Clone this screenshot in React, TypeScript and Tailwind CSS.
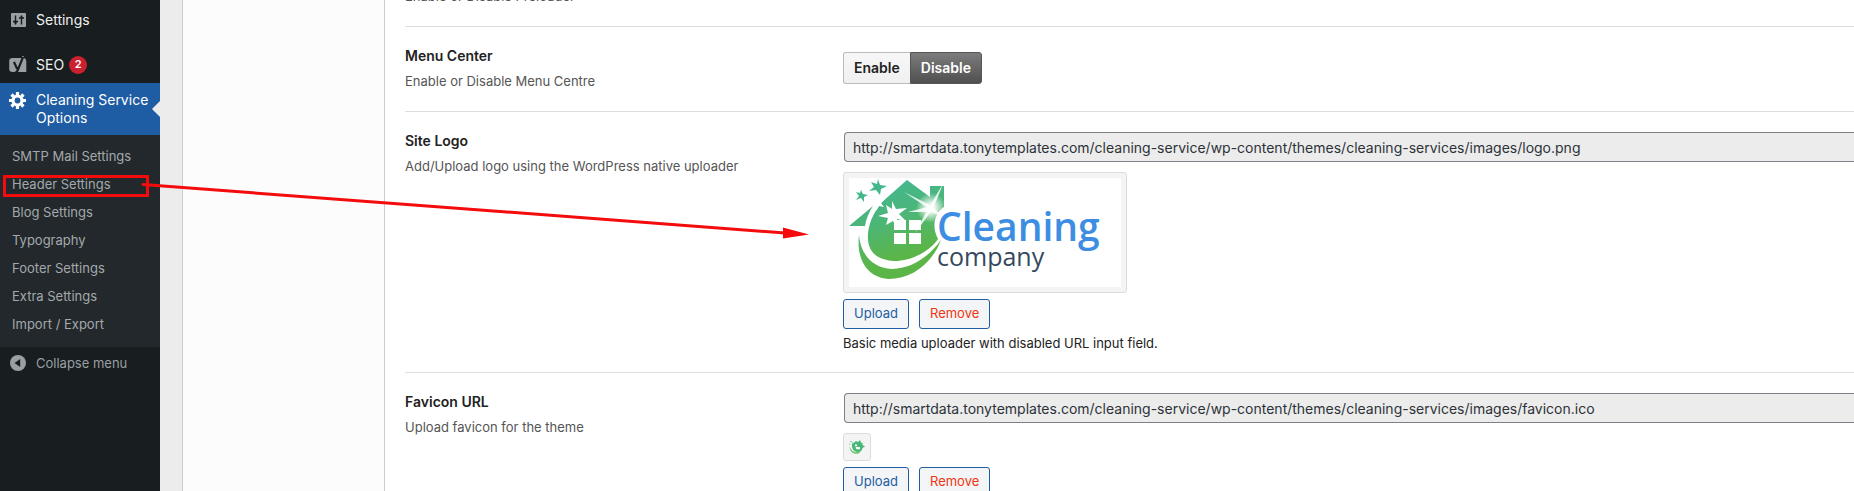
import type { ReactNode } from "react";

const IMAGES_URL =
  "http://smartdata.tonytemplates.com/cleaning-service/wp-content/themes/cleaning-services/images";

const submenu = [
  "SMTP Mail Settings",
  "Header Settings",
  "Blog Settings",
  "Typography",
  "Footer Settings",
  "Extra Settings",
  "Import / Export",
];

function SettingsIcon() {
  return (
    <svg viewBox="0 0 20 20" className="h-5 w-5 shrink-0" aria-hidden="true">
      <rect x="3" y="3" width="15" height="14" rx="1" fill="#9a9fa3" />
      <path d="M7.5 5.5v9M13.5 5.5v9" stroke="#181d1f" strokeWidth="1.4" />
      <path d="M5 11.5h5M11 8h5" stroke="#181d1f" strokeWidth="1.6" />
      <path d="M5.8 12.2h3.4l-1.7 2.2zM11.8 7.6h3.4l-1.7-2.2z" fill="#181d1f" />
    </svg>
  );
}

function YoastIcon() {
  return (
    <svg viewBox="0 0 20 20" className="h-5 w-5 shrink-0" aria-hidden="true">
      <path d="M4.5 3H16c1.400.5 2.300 1.800 2.300 3.300V17H4.500A3.300 3.300 0 0 1 1.200 13.700V6.300A3.300 3.300 0 0 1 4.500 3z" fill="#9a9fa3" />
      <path d="M6 7l3.200 7M15.500.8L9.800 15.200c-.8 2-1.900 2.900-4 2.900" stroke="#181d1f" strokeWidth="2.2" fill="none" />
      <path d="M14.300 1.500h1.500" stroke="#9a9fa3" strokeWidth="1" />
    </svg>
  );
}

function GearIcon() {
  return (
    <svg viewBox="0 0 20 20" className="h-5 w-5 shrink-0" fill="none" stroke="#fff" aria-hidden="true">
      <circle cx="9.5" cy="9.5" r="4.5" strokeWidth="3.2" />
      <path d="M9.500 1v3M9.500 15v3M1 9.500h3M15 9.500h3M3.500 3.500l2 2M13.500 13.500l2 2M3.500 15.500l2-2M13.500 5.500l2-2" strokeWidth="3.2" />
    </svg>
  );
}

function CollapseIcon() {
  return (
    <svg viewBox="0 0 20 20" className="h-5 w-5 shrink-0" aria-hidden="true">
      <circle cx="10" cy="10" r="8" fill="#9a9fa3" />
      <path d="M12.200 6v8L6.500 10z" fill="#181d1f" />
    </svg>
  );
}

function HouseMark() {
  return (
    <g>
      <defs>
        <linearGradient id="leaf" gradientUnits="userSpaceOnUse" x1="30" y1="5" x2="60" y2="100">
          <stop offset="0" stopColor="#43b78f" />
          <stop offset="0.35" stopColor="#4bb67a" />
          <stop offset="0.75" stopColor="#5ab54a" />
          <stop offset="1" stopColor="#5cb645" />
        </linearGradient>
        <radialGradient id="glow">
          <stop offset="0" stopColor="#fff" />
          <stop offset="0.3" stopColor="#fff" stopOpacity="0.85" />
          <stop offset="1" stopColor="#fff" stopOpacity="0" />
        </radialGradient>
      </defs>
      <g fill="url(#leaf)">
        <path d="M0 48L24 28C20 34 17 41 16 48z" />
        <path d="M58 2L81 19V8h14v21C86 35 82 48 89 61 80 74 62 83 45 83 28 82 20 74 19 62 18 50 23 36 33 24z" />
        <path d="M10 57C11 73 21 90 43 91 65 90 80 78 92 62 83 86 62 101 40 101 19 100 7 82 10 57z" />
        <path d="M29 1l2 6 7 1-6 3-1 6-4-5-7 1 5-4-3-5 6 2z" />
        <path d="M12 12l2 4 5 1-4 2v5l-3-4-5 2 3-4-3-4 4 1z" />
      </g>
      <g fill="#fff">
        <path d="M28 18l2 4 6-1-4 4 3 4-5-1-3 5-1-5-5-1 4-3-3-5 5 2z" />
        <path d="M43 23l4 8 11-1-8 6 7 7-9-2 1 11-5-9-7 4 2-7-10-2 10-3-2-8 6 4z" />
        <path d="M45 42h12v10H45zM60 42h12v10H60zM45 55h12v11H45zM60 55h12v11H60z" />
        <path d="M55 14l28 14-1 4zM94 6L84 31l-18 24 14-26zM59 34l23-6 14 12-14-6z" fillOpacity="0.85" />
      </g>
      <circle cx="82" cy="30" r="15" fill="url(#glow)" />
    </g>
  );
}

function SiteLogo() {
  return (
    <svg viewBox="0 0 272 109" className="block w-68 bg-white" role="img" aria-label="Cleaning company">
      <HouseMark />
      <text x="88" y="63" fontFamily="Open Sans, sans-serif" fontWeight="600" fontSize="39" fill="#3d8de3">
        Cleaning
      </text>
      <text x="88" y="88" fontFamily="Open Sans, sans-serif" fontSize="25" fill="#34495e">
        company
      </text>
    </svg>
  );
}

function Favicon() {
  return (
    <svg viewBox="0 0 16 16" className="block h-4 w-4" role="img" aria-label="Favicon">
      <path d="M3 5l4-3 2 1 2-2 1 2.500 1.500.5v2L16 7.500l-2.500 1.500c-.5 3-2.500 4-5 4C4.500 12.500 2.500 9.500 3 5z" fill="#48b878" />
      <path d="M.8 6.500C1 10.500 4 13.500 8 13.300l4-1.300c-2 3-5.500 3.500-8 2C1.500 12.500.2 9.500.8 6.500z" fill="#63c05c" />
      <path d="M1 2h2v1H1zM3 3.500h1.500V5H3zM0 4.500h1.500v1H0z" fill="#7fd0ae" />
      <path d="M6 5.500h2v1.800H6zM6.500 8H11v2.200H7.500z" fill="#fff" />
    </svg>
  );
}

function FieldRow({ title, description, children }: { title: string; description: string; children: ReactNode }) {
  return (
    <section className="flex border-t border-[#dedede] pt-5 pb-5">
      <div className="w-[438px] shrink-0">
        <h2 className="text-sm leading-[18px] font-semibold text-[#222]">{title}</h2>
        <p className="mt-1.5 text-[13px] leading-5 text-[#555]">{description}</p>
      </div>
      <div className="min-w-0 flex-1">{children}</div>
    </section>
  );
}

function MediaField({ label, url, preview, note }: { label: string; url: string; preview: ReactNode; note?: string }) {
  return (
    <div>
      <input
        type="text"
        readOnly
        aria-label={label}
        value={url}
        className="ml-px block h-[30px] w-full rounded-l border border-r-0 border-[#7e8087] bg-[#ececec] px-2 text-sm text-[#2c3338] outline-none"
      />
      <div className="mt-2.5 w-fit rounded-[3px] border border-[#dcdcdc] bg-[#f4f4f4] p-[5px]">{preview}</div>
      <div className="mt-1.5 flex gap-2.5">
        <button type="button" className="h-[30px] rounded-[3px] border border-[#1e5ca3] bg-[#f3f5f6] px-2.5 text-[13px] text-[#1e5ca3]">
          Upload
        </button>
        <button type="button" className="h-[30px] rounded-[3px] border border-[#1e5ca3] bg-[#f3f5f6] px-2.5 text-[13px] text-[#ef3511]">
          Remove
        </button>
      </div>
      {note && <p className="mt-1.5 text-[13px] leading-[17px] text-[#222]">{note}</p>}
    </div>
  );
}

function Sidebar() {
  return (
    <nav className="w-40 shrink-0 bg-[#181d1f] pt-1 text-sm text-[#f0f0f1]">
      <a href="#settings" className="flex h-[34px] items-center gap-2 pl-2 pb-0.5">
        <SettingsIcon />
        Settings
      </a>
      <a href="#seo" className="mt-[11px] flex h-[34px] items-center gap-2 pl-2 pb-0.5">
        <YoastIcon />
        <span className="flex items-center gap-[5px]">
          SEO
          <span className="flex h-[18px] w-[18px] items-center justify-center rounded-full bg-[#ca2030] text-[11px] font-semibold text-white">
            2
          </span>
        </span>
      </a>
      <a href="#options" className="relative flex gap-2 bg-[#1e5ca3] py-2 pl-2 text-white">
        <GearIcon />
        <span className="leading-[18px]">
          Cleaning Service
          <br />
          Options
        </span>
        <span className="absolute top-[18px] right-0 border-y-8 border-r-8 border-y-transparent border-r-[#ececec]" />
      </a>
      <ul className="bg-[#22282b] pt-[7px] pb-[9px] text-[13px] text-[#a4a8ab]">
        {submenu.map((item) => (
          <li key={item}>
            <a href="#" className="block pl-3 leading-7">
              {item}
            </a>
          </li>
        ))}
      </ul>
      <button type="button" className="flex h-[34px] items-center gap-2 pl-2 pb-0.5 text-[13px] text-[#9a9fa3]">
        <CollapseIcon />
        Collapse menu
      </button>
    </nav>
  );
}

// Red frame around "Header Settings" with an arrow to the logo preview
function Annotation() {
  return (
    <svg className="pointer-events-none absolute top-0 left-0" width="820" height="260" aria-hidden="true">
      <rect x="4.5" y="176.5" width="143" height="19" fill="none" stroke="#f40b0b" strokeWidth="3" />
      <path d="M143 184.500L785 233" stroke="#f40b0b" strokeWidth="3" strokeLinecap="round" />
      <path d="M783 227.500L809 234.500 783 238.500z" fill="#f40b0b" />
    </svg>
  );
}

export default function App() {
  return (
    <div className="relative flex h-screen overflow-hidden bg-[#ececec] font-[Inter,sans-serif]">
      <Sidebar />
      <div className="ml-[22px] w-[203px] shrink-0 border-x border-[#ccc] bg-[#fcfcfc]" />
      <main className="min-w-0 flex-1 bg-white pl-5">
        <p className="-mt-3.5 pb-5 text-[13px] leading-5 text-[#555]">Enable or Disable Preloader</p>

        <FieldRow title="Menu Center" description="Enable or Disable Menu Centre">
          <div className="mt-[5px] flex text-sm font-semibold">
            <button type="button" className="h-8 rounded-l-[3px] border border-r-0 border-[#bbb] bg-linear-to-b from-[#f7f7f7] to-[#f0f0f0] px-2.5 text-[#222]">
              Enable
            </button>
            <button type="button" className="h-8 rounded-r-[3px] border border-[#555] bg-linear-to-b from-[#7c7c7c] to-[#505050] px-2.5 text-white">
              Disable
            </button>
          </div>
        </FieldRow>

        <FieldRow title="Site Logo" description="Add/Upload logo using the WordPress native uploader">
          <MediaField
            label="Site Logo"
            url={`${IMAGES_URL}/logo.png`}
            preview={<SiteLogo />}
            note="Basic media uploader with disabled URL input field."
          />
        </FieldRow>

        <FieldRow title="Favicon URL" description="Upload favicon for the theme">
          <MediaField label="Favicon URL" url={`${IMAGES_URL}/favicon.ico`} preview={<Favicon />} />
        </FieldRow>
      </main>
      <Annotation />
    </div>
  );
}
